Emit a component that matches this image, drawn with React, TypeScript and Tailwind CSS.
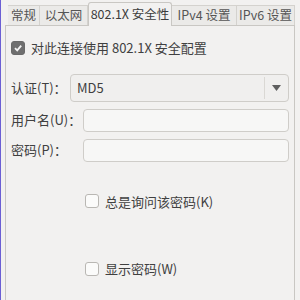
// NetworkManager 802.1X security tab (300x300)

const font = { fontFamily: '"Noto Sans CJK SC", "Noto Sans", sans-serif' }

function Tab({ label, w, active }: { label: string; w: string; active?: boolean }) {
  if (active) {
    return (
      <div
        className={`${w} h-[24px] whitespace-nowrap flex items-center justify-center bg-[#f2f1f0] border border-b-0 border-[#c9c7c3] rounded-t-[3px] -mb-px relative z-10 text-[12.5px] leading-none text-[#3c3c3c]`}
      >
        {label}
      </div>
    )
  }
  return (
    <div
      className={`${w} h-[20px] whitespace-nowrap flex items-center justify-center bg-[#ebeae8] border-t border-r border-[#d4d2ce] text-[12.5px] leading-none text-[#555555]`}
    >
      {label}
    </div>
  )
}

function Check({ checked }: { checked?: boolean }) {
  return (
    <span
      className={`w-[14px] h-[14px] rounded-[3px] border flex items-center justify-center shrink-0 ${
        checked ? 'bg-[#6f6f6f] border-[#6a6a6a]' : 'bg-[#fbfbfa] border-[#b9b7b3]'
      }`}
    >
      {checked && (
        <svg width="10" height="10" viewBox="0 0 10 10">
          <path d="M2 5.2 L4.2 7.4 L8.2 2.6" fill="none" stroke="#f4f4f4" strokeWidth="1.8" />
        </svg>
      )}
    </span>
  )
}

export default function App() {
  return (
    <div style={font} className="w-[300px] h-[300px] bg-[#f2f1f0] border-l border-[#6b5fd4] overflow-hidden flex flex-col">
      <div className="h-[25px] flex items-end pl-[7px]">
        <Tab label="常规" w="w-[32px]" />
        <Tab label="以太网" w="w-[48px]" />
        <Tab label="802.1X 安全性" w="w-[84px]" active />
        <Tab label="IPv4 设置" w="w-[65px]" />
        <Tab label="IPv6 设置" w="w-[58px]" />
      </div>

      <div className="flex-1 ml-[4px] mr-[5px] border border-b-0 border-[#c9c7c3] px-[5px] text-[13px] text-[#404040]">
        <div className="flex items-center gap-[6px] mt-[12px]">
          <Check checked />
          <span>对此连接使用 802.1X 安全配置</span>
        </div>

        <div className="mt-[16px] flex items-center">
          <span className="w-[59px]">认证(T)：</span>
          <div className="flex-1 h-[28px] rounded-[4px] border border-[#cfcdc9] bg-[#f0efee] flex items-center">
            <span className="flex-1 pl-[6px]">MD5</span>
            <span className="w-px h-[22px] bg-[#dad8d4]" />
            <span className="w-[23px] flex justify-center">
              <svg width="9" height="6" viewBox="0 0 9 6">
                <path d="M0 0 H9 L4.5 6 Z" fill="#5f5f5f" />
              </svg>
            </span>
          </div>
        </div>

        <div className="mt-[7px] flex items-center">
          <span className="w-[72px]">用户名(U)：</span>
          <div className="flex-1 h-[23px] rounded-[4px] border border-[#cfcdc9] bg-[#f7f7f6]" />
        </div>

        <div className="mt-[7px] flex items-center">
          <span className="w-[72px]">密码(P)：</span>
          <div className="flex-1 h-[23px] rounded-[4px] border border-[#cfcdc9] bg-[#f7f7f6]" />
        </div>

        <div className="mt-[30px] ml-[74px] flex items-center gap-[6px]">
          <Check />
          <span>总是询问该密码(K)</span>
        </div>

        <div className="mt-[48px] ml-[74px] flex items-center gap-[6px]">
          <Check />
          <span>显示密码(W)</span>
        </div>
      </div>
    </div>
  )
}
